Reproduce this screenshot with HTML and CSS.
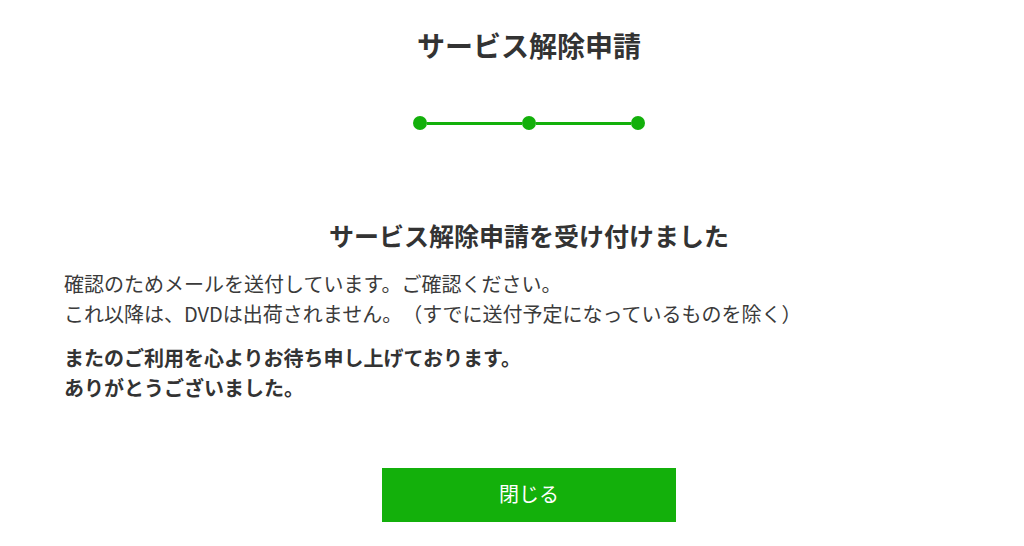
FILE: index.html
```html
<!DOCTYPE html>
<html lang="ja">
<head>
  <meta charset="UTF-8" />
  <meta name="viewport" content="width=device-width, initial-scale=1.0">
  <title>サービス解除申請</title>
  <link rel="stylesheet" href="styles.css">
</head>
<body class="cancel-page">

  <div class="cancel-container">
    <h1 class="page-title">サービス解除申請</h1>

    <!-- step indicator: all 3 done -->
    <div class="steps">
      <span class="step-dot"></span>
      <span class="step-line"></span>
      <span class="step-dot"></span>
      <span class="step-line"></span>
      <span class="step-dot"></span>
    </div>

    <h2 class="done-title">サービス解除申請を受け付けました</h2>

    <p class="notice">
      確認のためメールを送付しています。ご確認ください。<br>
      これ以降は、DVDは出荷されません。（すでに送付予定になっているものを除く）
    </p>

    <p class="thanks">
      またのご利用を心よりお待ち申し上げております。<br>
      ありがとうございました。
    </p>

    <div class="actions">
      <button class="close-btn">閉じる</button>
    </div>
  </div>

</body>
</html>
```

FILE: styles.css
```css
body, h1, h2, p, button {
  margin: 0;
  padding: 0;
  box-sizing: border-box;
}

body.cancel-page {
  font-family: "Noto Sans CJK JP", "Noto Sans", sans-serif;
  color: #333333;
  background: #ffffff;
  text-spacing-trim: space-all;
}

.cancel-container {
  padding: 24px 30px 0 64px;
}

.page-title {
  text-align: center;
  font-size: 28px;
  line-height: 42px;
  font-weight: bold;
}

.steps {
  display: flex;
  align-items: center;
  justify-content: center;
  margin-top: 50px;
}

.step-dot {
  width: 14px;
  height: 14px;
  border-radius: 50%;
  background-color: #13b00b;
}

.step-line {
  width: 95px;
  height: 3px;
  background-color: #13b00b;
}

.done-title {
  text-align: center;
  font-size: 25px;
  line-height: 36px;
  font-weight: bold;
  margin-top: 87px;
}

.notice {
  font-size: 20px;
  line-height: 30px;
  margin-top: 16px;
  color: #3a3a3a;
}

.notice .latin {
  letter-spacing: 1px;
}

.thanks {
  font-size: 20px;
  line-height: 30px;
  font-weight: bold;
  margin-top: 14px;
}

.actions {
  display: flex;
  justify-content: center;
  margin-top: 65px;
}

.close-btn {
  width: 294px;
  height: 54px;
  border: none;
  background-color: #13b00b;
  color: #ffffff;
  font-family: inherit;
  font-size: 20px;
  padding-bottom: 4px;
  cursor: pointer;
}
```
